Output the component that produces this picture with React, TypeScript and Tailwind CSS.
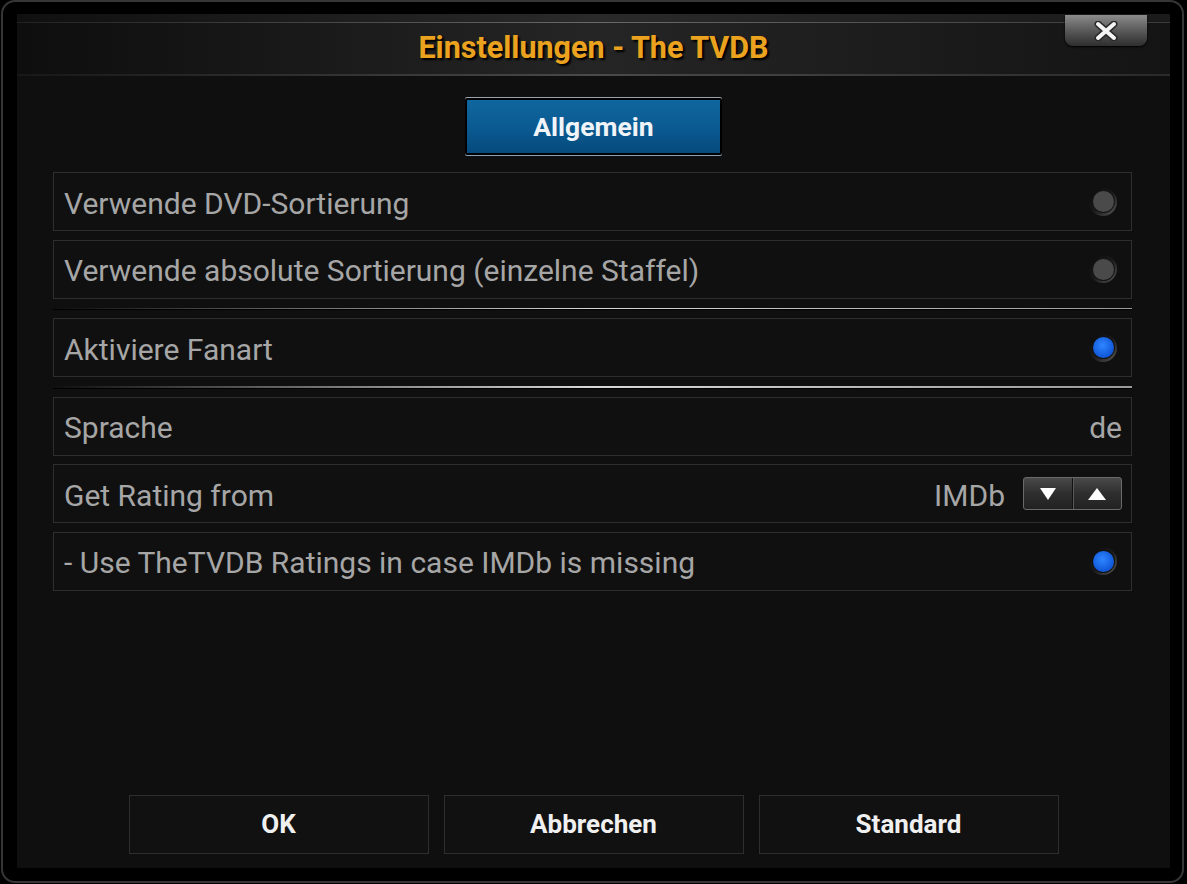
import React from 'react';

type Row =
  | { kind: 'toggle'; label: string; on: boolean }
  | { kind: 'value'; label: string; value: string }
  | { kind: 'spin'; label: string; value: string };

const groups: Row[][] = [
  [
    { kind: 'toggle', label: 'Verwende DVD-Sortierung', on: false },
    { kind: 'toggle', label: 'Verwende absolute Sortierung (einzelne Staffel)', on: false },
  ],
  [{ kind: 'toggle', label: 'Aktiviere Fanart', on: true }],
  [
    { kind: 'value', label: 'Sprache', value: 'de' },
    { kind: 'spin', label: 'Get Rating from', value: 'IMDb' },
    { kind: 'toggle', label: '- Use TheTVDB Ratings in case IMDb is missing', on: true },
  ],
];

function Radio({ on }: { on: boolean }) {
  return (
    <div className="w-[28px] h-[28px] rounded-full flex items-center justify-center bg-gradient-to-br from-[#0a0a0a] via-[#1a1a1a] to-[#5a5a5a]">
      <div
        className={`w-[21px] h-[21px] rounded-full ${
          on
            ? 'bg-[radial-gradient(circle_at_45%_40%,#2f86ff,#0f57d8_70%)] shadow-[0_0_0_1px_#111]'
            : 'bg-[#4a4a4a] shadow-[0_0_0_1px_#161616]'
        }`}
      />
    </div>
  );
}

function Spinner() {
  return (
    <div className="flex h-[33px] w-[99px] rounded-[3px] border border-[#6a6a6a] bg-gradient-to-b from-[#4a4a4a] via-[#2e2e2e] to-[#222] overflow-hidden">
      <div className="flex-1 flex items-center justify-center border-r border-[#121212]">
        <svg width="16" height="12" viewBox="0 0 16 12">
          <polygon points="0,0 16,0 8,12" fill="#fff" />
        </svg>
      </div>
      <div className="flex-1 flex items-center justify-center border-l border-[#5a5a5a]">
        <svg width="18" height="12" viewBox="0 0 18 12">
          <polygon points="0,12 18,12 9,0" fill="#fff" />
        </svg>
      </div>
    </div>
  );
}

function SettingRow({ row }: { row: Row }) {
  return (
    <div className="h-[59px] border border-[#2e2e2e] bg-[#101010] flex items-center pl-[10px] pr-[9px]">
      <span className="flex-1 pt-[3px] text-[30px] text-[#a6a6a6] whitespace-nowrap">{row.label}</span>
      {row.kind === 'toggle' && (
        <div className="mr-[5px]">
          <Radio on={row.on} />
        </div>
      )}
      {row.kind === 'value' && <span className="pt-[3px] text-[30px] text-[#a6a6a6]">{row.value}</span>}
      {row.kind === 'spin' && (
        <div className="flex items-center gap-[18px]">
          <span className="pt-[3px] text-[30px] text-[#a6a6a6]">{row.value}</span>
          <Spinner />
        </div>
      )}
    </div>
  );
}

function Separator() {
  return (
    <div className="my-[9px] h-[1.5px] bg-gradient-to-r from-transparent via-[#d8d8d8] to-[#9a9a9a] shadow-[0_1px_0_#000]" />
  );
}

export default function App() {
  return (
    <div className="w-[1187px] h-[884px] bg-black" style={{ fontFamily: 'Roboto, "Noto Sans", sans-serif' }}>
      <div className="w-[1183px] h-[883px] ml-[1px] rounded-[14px] border-2 border-[#363636] pt-[12px] pl-[14px] pr-[12px] pb-[13px]">
        <div className="relative h-full bg-[#0f0f0f] flex flex-col">
          {/* Header */}
          <div className="h-[62px] bg-gradient-to-r from-[#0e0e0e] via-[#252525] to-[#141414] flex flex-col">
            <div className="h-[8px] bg-gradient-to-r from-[#101010] via-[#2a2a2a] to-[#1a1a1a]" />
            <div className="h-[1px] bg-gradient-to-r from-[#222] via-[#6a6a6a] to-[#3a3a3a]" />
            <div className="flex-1 flex items-center justify-center pb-[2px]">
              <span className="text-[30.5px] font-bold text-[#eba31f] [text-shadow:2px_2px_2px_#000]">
                Einstellungen - The TVDB
              </span>
            </div>
            <div className="h-[2px] bg-gradient-to-r from-[#181818] via-[#4a4a4a] to-[#2a2a2a]" />
          </div>

          {/* Close button */}
          <div className="absolute left-[1048px] top-[1px] w-[82px] h-[31px] rounded-b-[8px] bg-gradient-to-b from-[#8c8c8c] via-[#5a5a5a] to-[#2e2e2e] shadow-[0_1px_2px_#000] flex items-center justify-center">
            <svg width="26" height="20" viewBox="0 0 26 20">
              <path d="M5 3 L21 17 M21 3 L5 17" stroke="#2a2a2a" strokeWidth="7" strokeLinecap="round" />
              <path d="M5 3 L21 17 M21 3 L5 17" stroke="#f4f4f4" strokeWidth="4" strokeLinecap="round" />
            </svg>
          </div>

          {/* Tab */}
          <div className="mt-[22px] flex justify-center">
            <div className="w-[257px] h-[57px] p-[2px] bg-black rounded-[2px] shadow-[0_-1px_0_#9aa4ad,0_1px_0_#8aa0b4]">
              <div className="h-full bg-gradient-to-b from-[#0f679f] via-[#0b5b92] to-[#054a7c] flex items-center justify-center">
                <span className="text-[26.5px] font-bold text-[#f0f4f8]">Allgemein</span>
              </div>
            </div>
          </div>

          {/* Settings */}
          <div className="mt-[17px] pl-[36px] pr-[38px] flex flex-col">
            {groups.map((g, gi) => (
              <React.Fragment key={gi}>
                {gi > 0 && <Separator />}
                <div className="flex flex-col gap-[8.5px]">
                  {g.map((r) => (
                    <SettingRow key={r.label} row={r} />
                  ))}
                </div>
              </React.Fragment>
            ))}
          </div>

          {/* Buttons */}
          <div className="mt-auto pb-[14px] flex justify-center gap-[15px]">
            {['OK', 'Abbrechen', 'Standard'].map((b) => (
              <div
                key={b}
                className="w-[300px] h-[59px] border border-[#2e2e2e] bg-[#111] flex items-center justify-center"
              >
                <span className="text-[26px] font-bold text-[#f0f0f0]">{b}</span>
              </div>
            ))}
          </div>
        </div>
      </div>
    </div>
  );
}
